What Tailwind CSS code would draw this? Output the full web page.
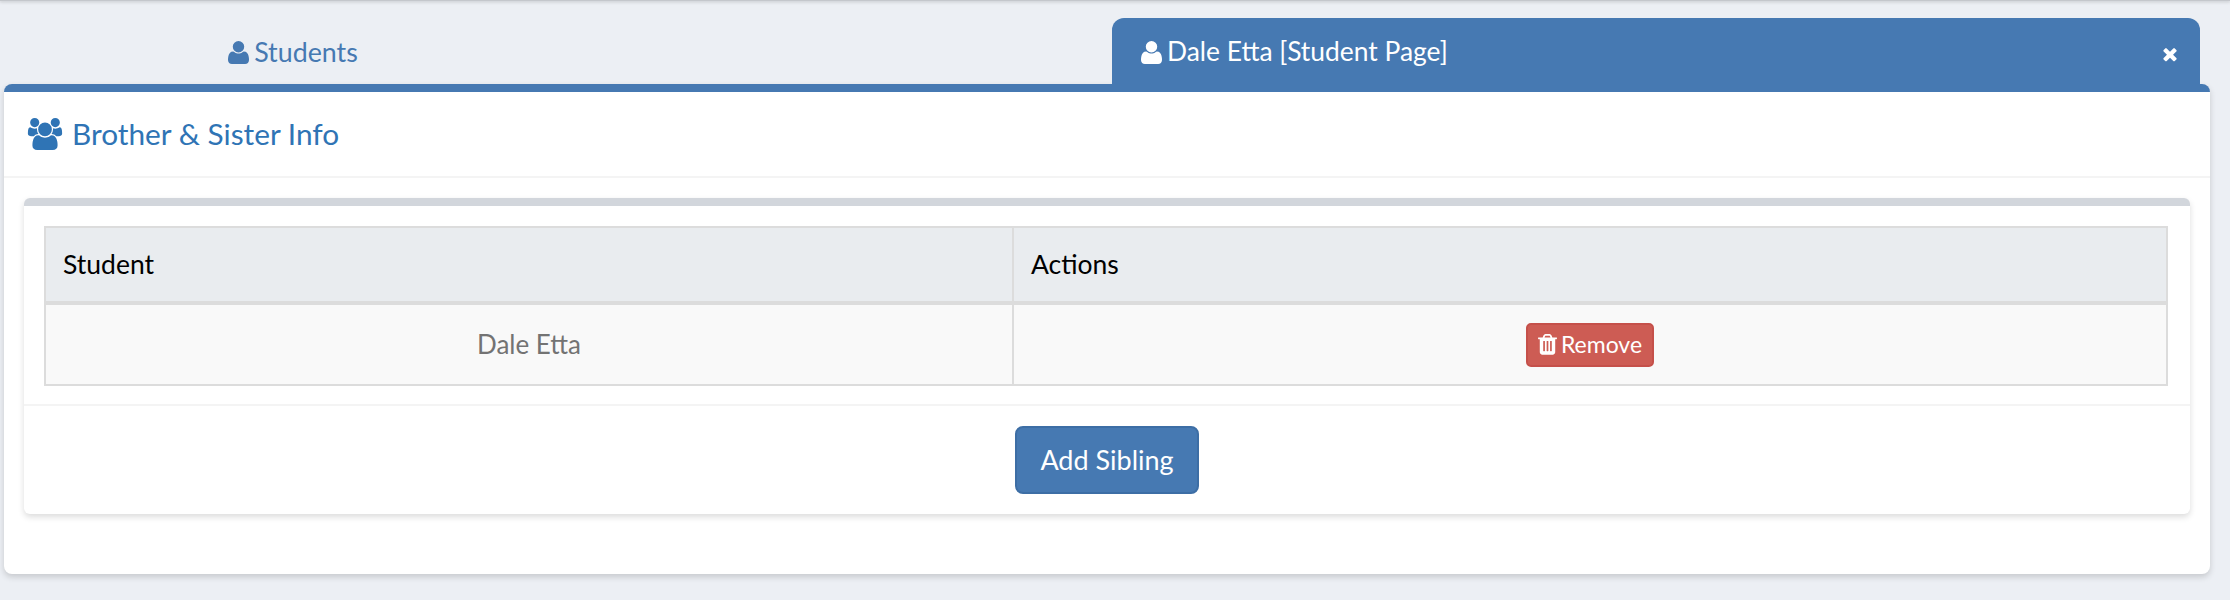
<!DOCTYPE html>
<html lang="en">
<head>
    <meta charset="UTF-8">
    <title>Brother &amp; Sister Info</title>
    <script src="https://cdn.jsdelivr.net/npm/@tailwindcss/browser@4"></script>
</head>
<body class="bg-[#eceff4] h-[600px] overflow-hidden font-['Lato',sans-serif] text-[#737373]">
    <div class="h-[1px] bg-[#c4c7cc] shadow-[0_1px_3px_rgba(0,0,0,0.3)]"></div>

    <!-- tabs -->
    <div class="flex mt-[17px] h-[74px] -mb-2 ml-1 mr-[30px] relative z-10">
        <div class="w-[578px] flex items-center justify-center h-[68px] text-[#4679b2] text-[26.8px]">
            <svg class="w-[21px] h-[27px] mr-[5px]" viewBox="0 0 1408 1792" fill="currentColor"><path d="M1408 1405q0 120-73 189.5t-194 69.5h-874q-121 0-194-69.5t-73-189.5q0-53 3.5-103.5t14-109 26.5-108.5 43-97.5 62-81 85.5-53.5 111.5-20q9 0 42 21.5t74.5 48 108 48 133.5 21.5 133.5-21.5 108-48 74.5-48 42-21.5q61 0 111.5 20t85.5 53.5 62 81 43 97.5 26.5 108.5 14 109 3.5 103.5zm-320-893q0 159-112.5 271.5t-271.5 112.5-271.5-112.5-112.5-271.5 112.5-271.5 271.5-112.5 271.5 112.5 112.5 271.5z"/></svg>
            <span>Students</span>
        </div>
        <div class="flex-1"></div>
        <div class="w-[1088px] flex items-start justify-between bg-[#4679b2] rounded-t-[12px] text-white text-[26.4px] pl-[29px] pr-[22px]">
            <div class="flex items-center h-[68px]">
                <svg class="w-[21px] h-[27px] mr-[5px]" viewBox="0 0 1408 1792" fill="currentColor"><path d="M1408 1405q0 120-73 189.5t-194 69.5h-874q-121 0-194-69.5t-73-189.5q0-53 3.5-103.5t14-109 26.5-108.5 43-97.5 62-81 85.5-53.5 111.5-20q9 0 42 21.5t74.5 48 108 48 133.5 21.5 133.5-21.5 108-48 74.5-48 42-21.5q61 0 111.5 20t85.5 53.5 62 81 43 97.5 26.5 108.5 14 109 3.5 103.5zm-320-893q0 159-112.5 271.5t-271.5 112.5-271.5-112.5-112.5-271.5 112.5-271.5 271.5-112.5 271.5 112.5 112.5 271.5z"/></svg>
                <span>Dale Etta [Student Page]</span>
            </div>
            <svg class="w-[16px] h-[20px] mt-[26px]" viewBox="0 0 1408 1792" fill="currentColor"><path d="M1298 1322q0 40-28 68l-136 136q-28 28-68 28t-68-28l-294-294-294 294q-28 28-68 28t-68-28l-136-136q-28-28-28-68t28-68l294-294-294-294q-28-28-28-68t28-68l136-136q28-28 68-28t68 28l294 294 294-294q28-28 68-28t68 28l136 136q28 28 28 68t-28 68l-294 294 294 294q28 28 28 68z"/></svg>
        </div>
    </div>

    <!-- main panel -->
    <div class="ml-1 mr-5 h-[490px] bg-white border-t-8 border-[#4679b2] rounded-[8px] shadow-[0_3px_6px_rgba(0,0,0,0.16)]">
        <div class="flex items-center h-[86px] pl-[23px] border-b-2 border-[#f4f4f4] text-[#2f74b5] text-[29.8px]">
            <svg class="w-[36px] h-[32px] mr-[9px]" viewBox="0 0 1920 1792" fill="currentColor"><path d="M593 896q-162 5-265 128h-134q-82 0-138-40.5t-56-118.5q0-353 124-353 6 0 43.5 21t97.5 42.5 119 21.5q67 0 133-23-5 37-5 66 0 139 81 256zm1071 637q0 120-73 189.5t-194 69.5h-874q-121 0-194-69.5t-73-189.5q0-53 3.5-103.5t14-109 26.5-108.5 43-97.5 62-81 85.5-53.5 111.5-20q10 0 43 21.5t73 48 107 48 135 21.5 135-21.5 107-48 73-48 43-21.5q61 0 111.5 20t85.5 53.5 62 81 43 97.5 26.5 108.5 14 109 3.5 103.5zm-1024-1277q0 106-75 181t-181 75-181-75-75-181 75-181 181-75 181 75 75 181zm704 384q0 159-112.5 271.5t-271.5 112.5-271.5-112.5-112.5-271.5 112.5-271.5 271.5-112.5 271.5 112.5 112.5 271.5zm576 225q0 78-56 118.5t-138 40.5h-134q-103-123-265-128 81-117 81-256 0-29-5-66 66 23 133 23 59 0 119-21.5t97.5-42.5 43.5-21q124 0 124 353zm-128-609q0 106-75 181t-181 75-181-75-75-181 75-181 181-75 181 75 75 181z"/></svg>
            <span>Brother &amp; Sister Info</span>
        </div>

        <!-- inner card -->
        <div class="mt-5 mx-5 h-[316px] border-t-8 border-[#d2d6dc] rounded-[6px] shadow-[0_3px_6px_rgba(0,0,0,0.14)]">
            <div class="h-[200px] border-b-2 border-[#f4f4f4] pt-[20px] px-[20px]">
                <table class="w-[2124px] border-collapse table-fixed">
                    <thead>
                        <tr class="h-[76px] bg-[#e9ecef] text-black text-[26.5px] text-left">
                            <th class="w-[968px] font-normal pl-[17px] border-2 border-[#dcdcdc] border-b-4">Student</th>
                            <th class="font-normal pl-[17px] border-2 border-[#dcdcdc] border-b-4">Actions</th>
                        </tr>
                    </thead>
                    <tbody>
                        <tr class="h-[82px] bg-[#f9f9f9] text-center text-[26px]">
                            <td class="border-2 border-[#dcdcdc]">Dale Etta</td>
                            <td class="border-2 border-[#dcdcdc]">
                                <button class="inline-flex items-center justify-center h-[44px] w-[128px] rounded-[5px] border-2 border-[#c5504a] bg-[#cd5c54] text-white text-[23px] align-middle">
                                    <svg class="w-[19px] h-[24px] mr-[4px]" viewBox="0 0 1408 1792" fill="currentColor"><path d="M512 1328v-704q0-14-9-23t-23-9h-64q-14 0-23 9t-9 23v704q0 14 9 23t23 9h64q14 0 23-9t9-23zm256 0v-704q0-14-9-23t-23-9h-64q-14 0-23 9t-9 23v704q0 14 9 23t23 9h64q14 0 23-9t9-23zm256 0v-704q0-14-9-23t-23-9h-64q-14 0-23 9t-9 23v704q0 14 9 23t23 9h64q14 0 23-9t9-23zm-544-992h448l-48-117q-7-9-17-11h-317q-10 2-17 11zm928 32v64q0 14-9 23t-23 9h-96v948q0 83-47 143.5t-113 60.5h-832q-66 0-113-58.5t-47-141.5v-952h-96q-14 0-23-9t-9-23v-64q0-14 9-23t23-9h309l70-167q15-37 54-63t79-26h320q40 0 79 26t54 63l70 167h309q14 0 23 9t9 23z"/></svg>
                                    <span>Remove</span>
                                </button>
                            </td>
                        </tr>
                    </tbody>
                </table>
            </div>
            <div class="flex justify-center pt-[20px]">
                <button class="h-[68px] w-[184px] rounded-[8px] border-2 border-[#3d6ea5] bg-[#4679b2] text-white text-[27px]">Add Sibling</button>
            </div>
        </div>
    </div>
</body>
</html>
